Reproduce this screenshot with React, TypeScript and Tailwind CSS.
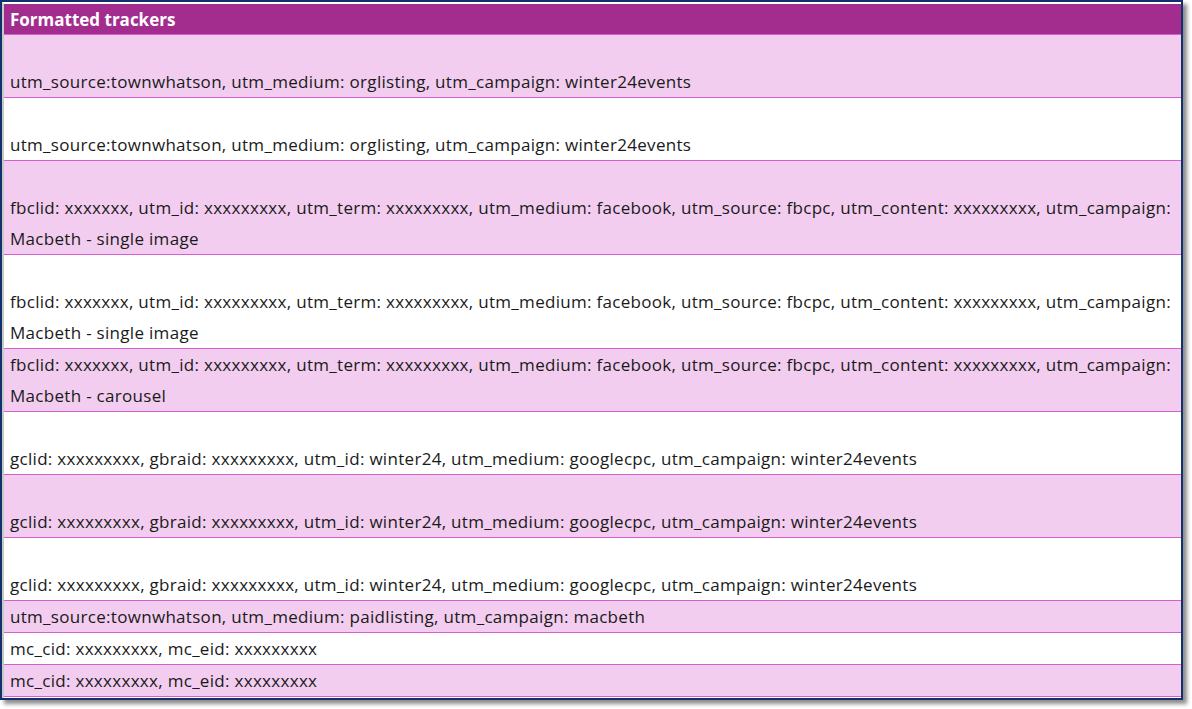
const fb = 'fbclid: xxxxxxx, utm_id: xxxxxxxxx, utm_term: xxxxxxxxx, utm_medium: facebook, utm_source: fbcpc, utm_content: xxxxxxxxx, utm_campaign:';
const gc = 'gclid: xxxxxxxxx, gbraid: xxxxxxxxx, utm_id: winter24, utm_medium: googlecpc, utm_campaign: winter24events';
const tw = 'utm_source:townwhatson, utm_medium: orglisting, utm_campaign: winter24events';

const rows: { lines: string[]; gap: boolean }[] = [
  { lines: [tw], gap: true },
  { lines: [tw], gap: true },
  { lines: [fb, 'Macbeth - single image'], gap: true },
  { lines: [fb, 'Macbeth - single image'], gap: true },
  { lines: [fb, 'Macbeth - carousel'], gap: false },
  { lines: [gc], gap: true },
  { lines: [gc], gap: true },
  { lines: [gc], gap: true },
  { lines: ['utm_source:townwhatson, utm_medium: paidlisting, utm_campaign: macbeth'], gap: false },
  { lines: ['mc_cid: xxxxxxxxx, mc_eid: xxxxxxxxx'], gap: false },
  { lines: ['mc_cid: xxxxxxxxx, mc_eid: xxxxxxxxx'], gap: false },
];

export default function App() {
  return (
    <div className="w-[1192px] h-[709px] bg-white" style={{ fontFamily: '"Open Sans", "Noto Sans", sans-serif' }}>
      <div className="w-[1183px] h-[700px] border-2 border-[#12306b] shadow-[4px_4px_4px_rgba(0,0,0,0.45)] overflow-hidden">
        <div className="h-full border-l-2 border-[#c9c9c9] border-t-2 border-t-white">
          <div className="h-[31px] bg-[#a22d8f] text-white font-bold text-[17px] leading-[31px] px-[6px] border-b border-[#d65fd0]">
            Formatted trackers
          </div>
          {rows.map((r, i) => (
            <div
              key={i}
              className={`px-[6px] text-[17px] leading-[31px] text-[#1a1a1a] border-b border-[#d65fd0] tracking-[0.3px] whitespace-nowrap ${i % 2 === 0 ? 'bg-[#f2cdef]' : 'bg-white'} ${r.gap ? 'pt-[31px]' : ''}`}
            >
              {r.lines.map((l, j) => (
                <div key={j}>{l}</div>
              ))}
            </div>
          ))}
        </div>
      </div>
    </div>
  );
}
